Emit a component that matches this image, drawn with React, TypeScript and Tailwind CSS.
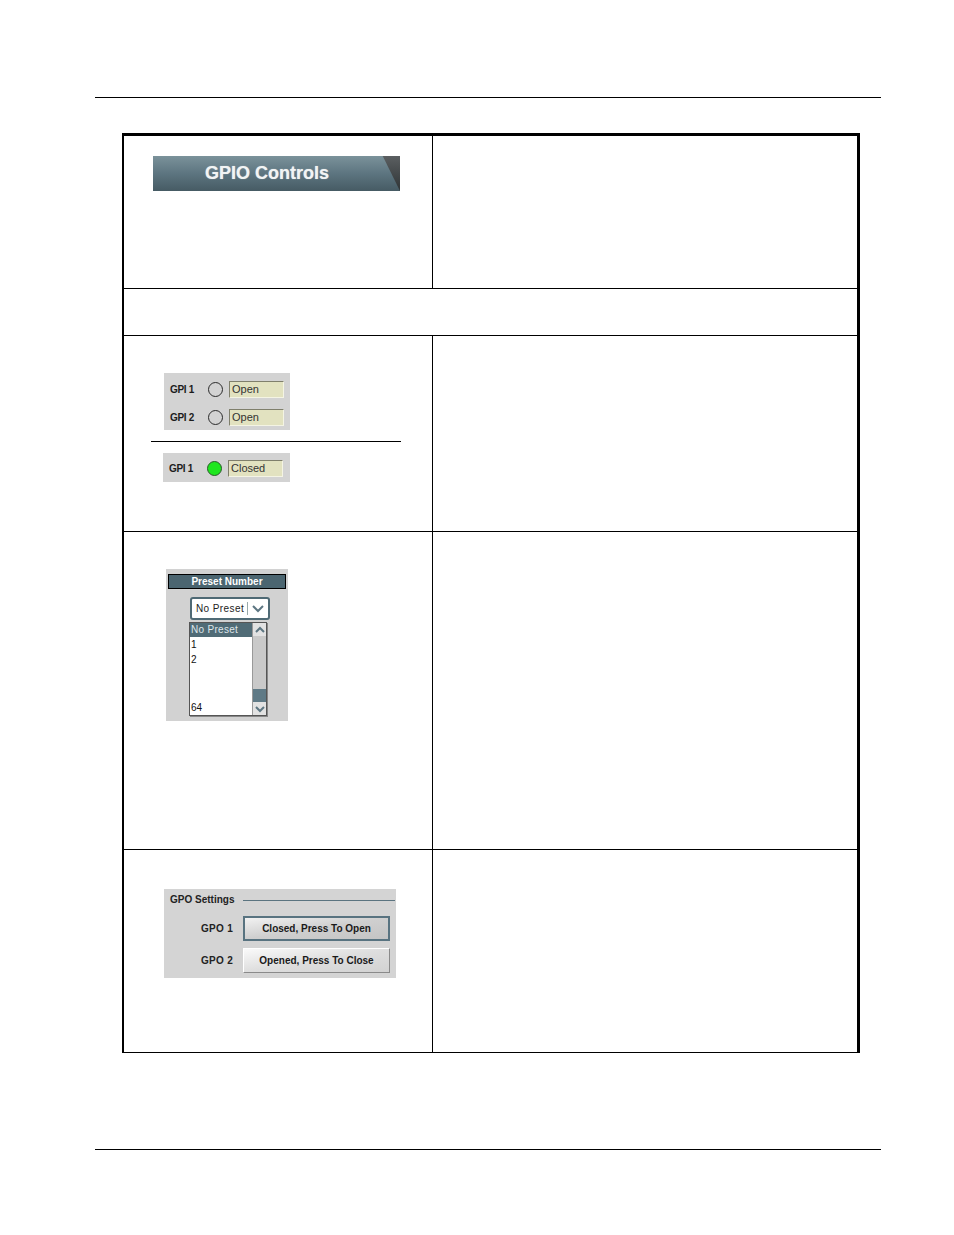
const ui = "font-['Liberation_Sans',Arial,sans-serif]";

function GpiRow({ label, on, value }: { label: string; on?: boolean; value: string }) {
  return (
    <div className="flex items-center h-[16px]">
      <span className="w-[38px] text-[10px] font-bold text-[#1c1c1c] tracking-[-0.3px]">{label}</span>
      <span
        className={
          on
            ? "w-[15px] h-[15px] rounded-full border border-[#2b5a2b] bg-[#1ee61e]"
            : "w-[15px] h-[15px] rounded-full border border-[#2a2a2a] bg-transparent"
        }
      />
      <div className="ml-[6px] w-[55px] h-[17px] bg-[#e2e2c0] border border-t-[#7f7f6c] border-l-[#7f7f6c] border-b-[#f4f4e4] border-r-[#f4f4e4] flex items-center pl-[2px] text-[11px] text-[#333] leading-none">
        {value}
      </div>
    </div>
  );
}

function GpioBanner() {
  return (
    <div className="relative w-[247px] h-[35px] bg-gradient-to-b from-[#5b5f61] to-[#2f3436]">
      <div className="absolute inset-0 bg-gradient-to-b from-[#7b929a] via-[#5d7580] to-[#465b64] [clip-path:polygon(0_0,93%_0,100%_100%,0_100%)]" />
      <div className="relative h-full flex items-center pl-[52px] text-[18px] font-bold text-[#f2f4f4] [text-shadow:0_0_1px_rgba(255,255,255,0.6)]">
        GPIO Controls
      </div>
    </div>
  );
}

function PresetWidget() {
  return (
    <div className="w-[122px] h-[152px] bg-[#d2d2d2] pt-[5px] px-[1px]">
      <div className="mx-[1px] h-[15px] bg-[#4b6570] border border-black flex items-center justify-center text-[10px] font-bold text-white leading-none">
        Preset Number
      </div>
      <div className="ml-[23px] mt-[8px] w-[80px] h-[23px] rounded-[3px] border-2 border-[#4f6a75] bg-white flex items-center">
        <span className="pl-[4px] text-[10px] text-[#222] tracking-[0.4px] leading-none">No Preset</span>
        <span className="ml-auto w-px h-[13px] bg-[#9aa]" />
        <svg width="16" height="12" viewBox="0 0 16 12" className="mx-[2px]">
          <polyline points="3,3 8,8 13,3" fill="none" stroke="#5d7682" strokeWidth="2" />
        </svg>
      </div>
      <div className="ml-[22px] mt-[2px] w-[78px] h-[94px] bg-white border border-[#555] shadow-[1px_1px_0_#888] flex">
        <div className="flex-1 flex flex-col text-[10px] text-[#111] leading-none">
          <div className="h-[14px] bg-[#506b76] text-[#dfe6ea] flex items-center pl-[1px] tracking-[0.3px]">No Preset</div>
          <div className="h-[15px] flex items-center pl-[1px]">1</div>
          <div className="h-[15px] flex items-center pl-[1px]">2</div>
          <div className="flex-1" />
          <div className="h-[14px] flex items-center pl-[1px]">64</div>
        </div>
        <div className="w-[14px] bg-[#c9c9c9] border-l border-[#999] flex flex-col">
          <div className="h-[13px] bg-[#e2e2e2] flex items-center justify-center">
            <svg width="10" height="8" viewBox="0 0 10 8">
              <polyline points="1,6 5,2 9,6" fill="none" stroke="#5d7682" strokeWidth="2" />
            </svg>
          </div>
          <div className="flex-1" />
          <div className="h-[13px] bg-[#5f7a86]" />
          <div className="h-[13px] bg-[#e2e2e2] flex items-center justify-center">
            <svg width="10" height="8" viewBox="0 0 10 8">
              <polyline points="1,2 5,6 9,2" fill="none" stroke="#5d7682" strokeWidth="2" />
            </svg>
          </div>
        </div>
      </div>
    </div>
  );
}

function GpoButton({ label, text, pressed }: { label: string; text: string; pressed?: boolean }) {
  return (
    <div className="flex items-center">
      <span className="w-[79px] pr-[10px] text-right text-[10px] font-bold text-[#222] tracking-[0.3px]">{label}</span>
      <div
        className={
          pressed
            ? "w-[147px] h-[25px] border-2 border-[#587380] bg-gradient-to-br from-[#f2f2f2] via-[#cfcfcf] to-[#c4c4c4] flex items-center justify-center text-[10px] font-bold text-[#1a1a1a]"
            : "w-[147px] h-[25px] border border-t-white border-l-white border-b-[#8a8a8a] border-r-[#8a8a8a] bg-gradient-to-br from-[#fafafa] via-[#dedede] to-[#d2d2d2] flex items-center justify-center text-[10px] font-bold text-[#1a1a1a]"
        }
      >
        {text}
      </div>
    </div>
  );
}

function GpoWidget() {
  return (
    <div className="w-[232px] h-[89px] bg-[#d4d4d4] pt-[3px]">
      <div className="h-[14px] flex items-center pl-[6px] pr-[1px]">
        <span className="text-[10px] font-bold text-[#222]">GPO Settings</span>
        <span className="ml-[9px] flex-1 h-px bg-[#5b7480] mt-[3px]" />
      </div>
      <div className="mt-[10px] flex flex-col gap-[7px]">
        <GpoButton label="GPO 1" text="Closed, Press To Open" pressed />
        <GpoButton label="GPO 2" text="Opened, Press To Close" />
      </div>
    </div>
  );
}

function Row({ h, left, last }: { h: string; left?: React.ReactNode; last?: boolean }) {
  return (
    <div className={`${h} ${last ? "" : "border-b border-black"} flex`}>
      <div className="w-[309px] border-r border-black">{left}</div>
      <div className="flex-1" />
    </div>
  );
}

export default function App() {
  return (
    <div className={`w-[954px] h-[1235px] bg-white overflow-hidden ${ui}`}>
      <div className="mt-[97px] ml-[95px] w-[786px] h-px bg-black" />

      <div className="mt-[35px] ml-[122px] w-[738px] border-t-[3px] border-l-2 border-r-[3px] border-b border-black">
        <Row
          h="h-[153px]"
          left={
            <div className="pt-[20px] pl-[29px]">
              <GpioBanner />
            </div>
          }
        />
        <div className="h-[47px] border-b border-black" />
        <Row
          h="h-[196px]"
          left={
            <div className="pt-[37px]">
              <div className="ml-[40px] w-[126px] h-[57px] bg-[#d3d3d3] pt-[8px] pl-[6px] flex flex-col gap-[12px]">
                <GpiRow label="GPI 1" value="Open" />
                <GpiRow label="GPI 2" value="Open" />
              </div>
              <div className="mt-[11px] ml-[27px] w-[250px] h-px bg-black" />
              <div className="mt-[11px] ml-[39px] w-[127px] h-[29px] bg-[#d3d3d3] pt-[7px] pl-[6px]">
                <GpiRow label="GPI 1" value="Closed" on />
              </div>
            </div>
          }
        />
        <Row
          h="h-[318px]"
          left={
            <div className="pt-[37px] pl-[42px]">
              <PresetWidget />
            </div>
          }
        />
        <Row
          h="h-[202px]"
          last
          left={
            <div className="pt-[39px] pl-[40px]">
              <GpoWidget />
            </div>
          }
        />
      </div>

      <div className="mt-[96px] ml-[95px] w-[786px] h-px bg-black" />
    </div>
  );
}
